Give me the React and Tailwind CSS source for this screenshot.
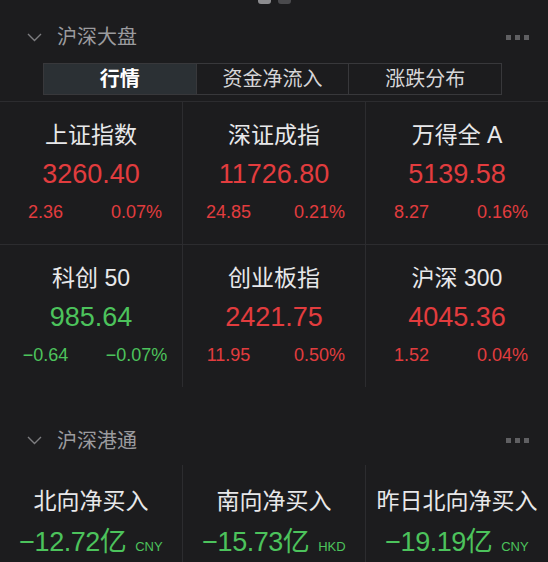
import React from "react";

const RED = "text-[#e23c3e]";
const GREEN = "text-[#4cc35c]";

const indexRows = [
  [
    { name: "上证指数", value: "3260.40", chg: "2.36", pct: "0.07%", up: true },
    { name: "深证成指", value: "11726.80", chg: "24.85", pct: "0.21%", up: true },
    { name: "万得全 A", value: "5139.58", chg: "8.27", pct: "0.16%", up: true },
  ],
  [
    { name: "科创 50", value: "985.64", chg: "−0.64", pct: "−0.07%", up: false },
    { name: "创业板指", value: "2421.75", chg: "11.95", pct: "0.50%", up: true },
    { name: "沪深 300", value: "4045.36", chg: "1.52", pct: "0.04%", up: true },
  ],
];

const flows = [
  { name: "北向净买入", value: "−12.72亿", unit: "CNY" },
  { name: "南向净买入", value: "−15.73亿", unit: "HKD" },
  { name: "昨日北向净买入", value: "−19.19亿", unit: "CNY" },
];

const Chevron = () => (
  <svg width="15" height="9" viewBox="0 0 15 9" className="shrink-0">
    <polyline points="1,1 7.5,7.5 14,1" fill="none" stroke="#7d7d80" strokeWidth="1.4" />
  </svg>
);

const Dots = () => (
  <div className="ml-auto flex gap-[4px] mr-[19px]">
    <span className="w-[5px] h-[5px] bg-[#5f5f62]" />
    <span className="w-[5px] h-[5px] bg-[#5f5f62]" />
    <span className="w-[5px] h-[5px] bg-[#5f5f62]" />
  </div>
);

const SectionHeader = ({ title, className }) => (
  <div className={`flex items-center pl-[27px] ${className}`}>
    <Chevron />
    <span className="ml-[15px] text-[20px] leading-[26px] text-[#9b9b9e]">{title}</span>
    <Dots />
  </div>
);

const IndexCell = ({ item, last }) => {
  const color = item.up ? RED : GREEN;
  return (
    <div className={`flex-1 flex flex-col items-center pt-[18px] ${last ? "" : "border-r border-[#2c2c2f]"}`}>
      <div className="text-[23px] leading-[30px] text-[#e8e8ea]">{item.name}</div>
      <div className={`mt-[7px] text-[27px] leading-[34px] ${color}`}>{item.value}</div>
      <div className={`mt-[10px] w-full flex text-[18px] leading-[22px] ${color}`}>
        <span className="flex-1 text-center">{item.chg}</span>
        <span className="flex-1 text-center">{item.pct}</span>
      </div>
    </div>
  );
};

export default function App() {
  return (
    <div className="w-full h-[562px] overflow-hidden bg-[#1c1c1e] font-['Liberation_Sans','Noto_Sans_CJK_SC',sans-serif]">
      {/* page indicator */}
      <div className="flex justify-center gap-[7px] h-[4px] overflow-hidden">
        <span className="w-[13px] h-[7px] -mt-[3px] rounded-[3px] bg-[#8c8c8f]" />
        <span className="w-[13px] h-[7px] -mt-[3px] rounded-[3px] bg-[#4a4a4d]" />
      </div>

      <SectionHeader title="沪深大盘" className="h-[59px] pt-[7px]" />

      <div className="mx-[43px] w-[459px] h-[32px] flex border border-[#38383b] text-[20px]">
        <div className="flex-1 flex items-center justify-center bg-[#2b3034] text-white font-semibold">行情</div>
        <div className="flex-1 flex items-center justify-center border-l border-[#38383b] text-[#d6d6d8]">资金净流入</div>
        <div className="flex-1 flex items-center justify-center border-l border-[#38383b] text-[#d6d6d8]">涨跌分布</div>
      </div>

      <div className="mt-[6px] border-t border-[#2c2c2f]">
        <div className="flex h-[143px] border-b border-[#2c2c2f]">
          {indexRows[0].map((it, i) => (
            <IndexCell key={i} item={it} last={i === 2} />
          ))}
        </div>
        <div className="flex h-[142px]">
          {indexRows[1].map((it, i) => (
            <IndexCell key={i} item={it} last={i === 2} />
          ))}
        </div>
      </div>

      <SectionHeader title="沪深港通" className="h-[78px] pt-[29px]" />

      <div className="flex h-[97px]">
        {flows.map((f, i) => (
          <div
            key={i}
            className={`flex-1 flex flex-col items-center pt-[21px] ${i < 2 ? "border-r border-[#2c2c2f]" : ""}`}
          >
            <div className="text-[23px] leading-[30px] text-[#e8e8ea]">{f.name}</div>
            <div className={`mt-[9px] flex items-baseline ${GREEN}`}>
              <span className="text-[27px] leading-[34px] tracking-[-0.5px]">{f.value}</span>
              <span className="ml-[9px] text-[13px]">{f.unit}</span>
            </div>
          </div>
        ))}
      </div>
    </div>
  );
}
